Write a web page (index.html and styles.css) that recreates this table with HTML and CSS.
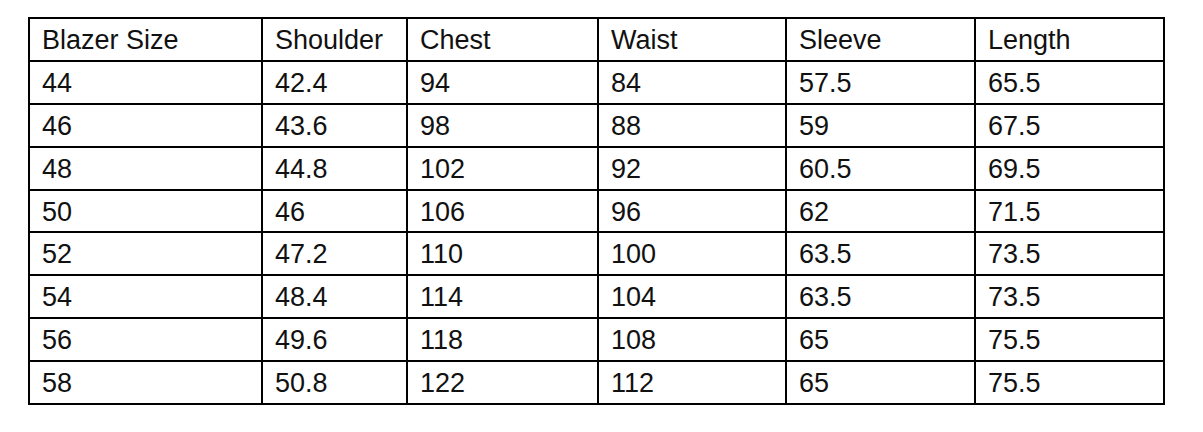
FILE: index.html
```html
<!DOCTYPE html>
<html>
<head>
<meta charset="utf-8">
<link rel="stylesheet" href="styles.css">
</head>
<body>
<table class="size-table">
  <colgroup>
    <col class="c1"><col class="c2"><col class="c3"><col class="c4"><col class="c5"><col class="c6">
  </colgroup>
  <tr><td>Blazer Size</td><td>Shoulder</td><td>Chest</td><td>Waist</td><td>Sleeve</td><td>Length</td></tr>
  <tr><td>44</td><td>42.4</td><td>94</td><td>84</td><td>57.5</td><td>65.5</td></tr>
  <tr><td>46</td><td>43.6</td><td>98</td><td>88</td><td>59</td><td>67.5</td></tr>
  <tr><td>48</td><td>44.8</td><td>102</td><td>92</td><td>60.5</td><td>69.5</td></tr>
  <tr><td>50</td><td>46</td><td>106</td><td>96</td><td>62</td><td>71.5</td></tr>
  <tr><td>52</td><td>47.2</td><td>110</td><td>100</td><td>63.5</td><td>73.5</td></tr>
  <tr><td>54</td><td>48.4</td><td>114</td><td>104</td><td>63.5</td><td>73.5</td></tr>
  <tr><td>56</td><td>49.6</td><td>118</td><td>108</td><td>65</td><td>75.5</td></tr>
  <tr><td>58</td><td>50.8</td><td>122</td><td>112</td><td>65</td><td>75.5</td></tr>
</table>
</body>
</html>
```
FILE: styles.css
```css
html, body {
  margin: 0;
  padding: 0;
  background: #ffffff;
}
body {
  padding: 17px 0 0 28px;
  font-family: "Liberation Sans", Arial, sans-serif;
  color: #111111;
}
.size-table {
  border-collapse: separate;
  border-spacing: 0;
  table-layout: fixed;
  width: 1137px;
  border-left: 2px solid #000;
  border-top: 2px solid #000;
}
.c1 { width: 233px; }
.c2 { width: 145px; }
.c3 { width: 191px; }
.c4 { width: 188px; }
.c5 { width: 189px; }
.c6 { width: 189px; }
.size-table td {
  box-sizing: border-box;
  height: 42.9px;
  padding: 1px 0 0 12px;
  border-right: 2px solid #000;
  border-bottom: 2px solid #000;
  font-size: 27px;
  line-height: 30px;
  vertical-align: middle;
  white-space: nowrap;
}
```
